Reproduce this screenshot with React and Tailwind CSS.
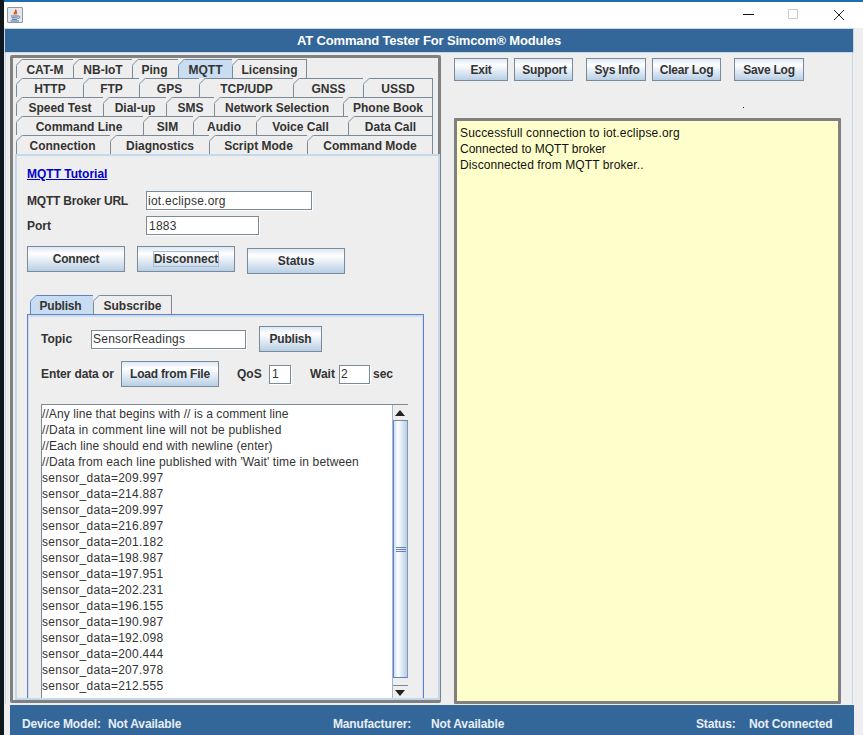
const tabRows = [
  [["CAT-M", 57], ["NB-IoT", 59], ["Ping", 46, false, "pr-[2px]"], ["MQTT", 54, true], ["Licensing", 74]],
  [["HTTP", 67], ["FTP", 56], ["GPS", 60], ["TCP/UDP", 94], ["GNSS", 70], ["USSD", 69]],
  [["Speed Test", 87], ["Dial-up", 63], ["SMS", 48], ["Network Selection", 129, false, "pr-[4px]"], ["Phone Book", 89]],
  [["Command Line", 127, false, "pr-[2px]"], ["SIM", 50, false, "pr-[2px]"], ["Audio", 63, false, "pr-[2px]"], ["Voice Call", 92, false, "pr-[4px]"], ["Data Call", 84]],
  [["Connection", 94, false, "pr-[2px]"], ["Diagnostics", 99], ["Script Mode", 98], ["Command Mode", 125]],
];

const lines = [
  ["//Any line that begins with // is a comment line", "tracking-[0.08px]"],
  ["//Data in comment line will not be published", "tracking-[0.2px]"],
  ["//Each line should end with newline (enter)", "tracking-[0.12px]"],
  ["//Data from each line published with 'Wait' time in between", "tracking-[0.135px]"],
  ["sensor_data=209.997", "tracking-[0.26px]"],
  ["sensor_data=214.887", "tracking-[0.26px]"],
  ["sensor_data=209.997", "tracking-[0.26px]"],
  ["sensor_data=216.897", "tracking-[0.26px]"],
  ["sensor_data=201.182", "tracking-[0.26px]"],
  ["sensor_data=198.987", "tracking-[0.26px]"],
  ["sensor_data=197.951", "tracking-[0.26px]"],
  ["sensor_data=202.231", "tracking-[0.26px]"],
  ["sensor_data=196.155", "tracking-[0.26px]"],
  ["sensor_data=190.987", "tracking-[0.26px]"],
  ["sensor_data=192.098", "tracking-[0.26px]"],
  ["sensor_data=200.444", "tracking-[0.26px]"],
  ["sensor_data=207.978", "tracking-[0.26px]"],
  ["sensor_data=212.555", "tracking-[0.26px]"],
];

function Tab({ label, width, active, line = "#7a8a99", height = 19, textClass = "" }) {
  return (
    <div
      className={`relative flex shrink-0 items-center justify-center border-t border-r border-l text-xs font-bold text-[#333333] ${active ? "bg-[#c8ddf2]" : "bg-[#eeeeee]"}`}
      style={{ width, height, borderColor: line }}
    >
      <svg className="absolute -left-px -top-px" width="7" height="7" viewBox="0 0 7 7">
        <polygon points="0,0 7,0 0,7" fill="#eeeeee" />
        <line x1="0" y1="6.5" x2="6.5" y2="0" stroke={line} strokeWidth="1" />
      </svg>
      <span className={`pt-px ${textClass}`}>{label}</span>
    </div>
  );
}

function Btn({ children, className = "" }) {
  return (
    <div
      className={`flex shrink-0 items-center justify-center border border-[#7a8a99] bg-[linear-gradient(180deg,#dde8f3_0%,#ffffff_28%,#b8cfe5_100%)] text-xs font-bold tracking-[-0.2px] text-[#333333] ${className}`}
    >
      {children}
    </div>
  );
}

function Field({ value, className = "" }) {
  return (
    <div className={`flex shrink-0 items-center border border-[#7a8a99] bg-white pl-[1px] text-xs tracking-[0.25px] text-[#333333] shadow-[1px_1px_0_#ffffff] ${className}`}>
      {value}
    </div>
  );
}

function ScrollArrow({ up }) {
  return (
    <svg width="10" height="6" viewBox="0 0 10 6">
      <polygon points={up ? "5,0 10,6 0,6" : "0,0 10,0 5,6"} fill="#222222" />
    </svg>
  );
}

export default function App() {
  return (
    <div className="relative flex h-[735px] w-[863px] flex-col overflow-hidden bg-[#eeeeee] font-['Liberation_Sans',Arial,sans-serif]">
      <div className="flex h-[28px] shrink-0 border-t-2 border-t-[#1f6fb0] bg-white pl-[7px]">
        <div className="mt-[5px] flex h-[16px] w-[16px] items-center justify-center rounded-[1px] border border-[#8c98a3] bg-[#e4e8ec]">
          <svg width="12" height="13" viewBox="0 0 12 13">
            <path d="M6.5 0.5 C8 2.5 4 3.5 5.2 5.5 C4.8 3.8 8.5 3.2 7 1.2 M8 3 C7 4 6.4 4.6 7 6" fill="none" stroke="#d9531e" strokeWidth="1.1" />
            <path d="M2 7 H9 M2.5 8.8 H8.5 M3 10.6 H8 M1.5 12 H10 M9 7 C11.5 6.8 11.5 9.5 8.5 9.5" fill="none" stroke="#3f6b9c" strokeWidth="0.9" />
          </svg>
        </div>
        <div className="ml-auto flex items-start">
          <svg className="mt-[12px]" width="11" height="2" viewBox="0 0 11 2">
            <rect width="11" height="1" fill="#111111" />
          </svg>
          <svg className="ml-[34px] mt-[7px]" width="10" height="10" viewBox="0 0 10 10">
            <rect x="0.5" y="0.5" width="9" height="9" fill="none" stroke="#cccccc" />
          </svg>
          <svg className="ml-[35px] mr-[18px] mt-[7px]" width="12" height="12" viewBox="0 0 12 12">
            <path d="M1 1 L11 11 M11 1 L1 11" stroke="#222222" strokeWidth="1" />
          </svg>
        </div>
      </div>

      <div className="ml-[4px] mr-[9px] flex h-[25px] shrink-0 items-center justify-center border border-[#c5d6e6] bg-[#336699] text-[13px] font-bold tracking-[-0.16px] text-white">
        AT Command Tester For Simcom® Modules
      </div>

      <div className="ml-[5px] mr-[10px] flex min-h-0 flex-1 border-x border-[#c5d6e6]">
        <div className="ml-[4px] mt-[2px] flex h-[648px] w-[431px] shrink-0 flex-col rounded-[2px] border-[3px] border-[#808080] pl-[2px] pt-[1px]">
          <div className="flex flex-col">
            {tabRows.map((row, i) => (
              <div key={i} className="flex pl-[1px]">
                {row.map(([label, w, a, t]) => (
                  <div key={label} className="-mr-px">
                    <Tab label={label} width={w + 1} active={a} textClass={t} />
                  </div>
                ))}
              </div>
            ))}
          </div>
          <div className="flex min-h-0 w-[425px] flex-1 flex-col border-2 border-[#c4d8ec] pl-[10px] pt-[11px]">
            <div className="text-xs font-bold leading-[15px] text-[#0000cc] underline">MQTT Tutorial</div>
            <div className="mt-[9px] flex items-center">
              <span className="w-[119px] text-xs font-bold tracking-[-0.2px] text-[#333333]">MQTT Broker URL</span>
              <Field value="iot.eclipse.org" className="h-[19px] w-[166px]" />
            </div>
            <div className="mt-[6px] flex items-center">
              <span className="w-[119px] text-xs font-bold text-[#333333]">Port</span>
              <Field value="1883" className="h-[19px] w-[113px] pl-[2px]" />
            </div>
            <div className="mt-[11px] flex items-start gap-[12px]">
              <Btn className="h-[26px] w-[98px]">Connect</Btn>
              <Btn className="h-[26px] w-[98px]">
                <span className="border border-[#a3bdd8] leading-[14px] tracking-normal">Disconnect</span>
              </Btn>
              <Btn className="mt-[2px] h-[26px] w-[98px]">
                <span className="tracking-normal">Status</span>
              </Btn>
            </div>

            <div className="mt-[21px] flex pl-[3px]">
              <div className="-mr-px">
                <Tab label="Publish" width={64} active line="#6382bf" textClass="tracking-[-0.2px] pr-[3px]" />
              </div>
              <Tab label="Subscribe" width={79} line="#7a8a99" />
            </div>
            <div className="flex min-h-0 w-[397px] flex-1 flex-col border-x border-t border-[#6382bf] pl-[13px] shadow-[inset_0_2px_0_#c8ddf2,inset_1px_0_0_#c8ddf2,inset_-1px_0_0_#c8ddf2]">
              <div className="mt-[11px] flex items-center">
                <span className="w-[50px] text-xs font-bold text-[#333333]">Topic</span>
                <Field value="SensorReadings" className="h-[19px] w-[155px]" />
                <Btn className="ml-[13px] h-[26px] w-[63px]">Publish</Btn>
              </div>
              <div className="mt-[9px] flex items-center">
                <span className="w-[80px] text-xs font-bold tracking-[-0.1px] text-[#333333]">Enter data or</span>
                <Btn className="h-[26px] w-[98px]">Load from File</Btn>
                <span className="ml-[18px] w-[32px] text-xs font-bold text-[#333333]">QoS</span>
                <Field value="1" className="h-[19px] w-[22px] pl-[2px]" />
                <span className="ml-[19px] w-[29px] text-xs font-bold text-[#333333]">Wait</span>
                <Field value="2" className="h-[19px] w-[31px]" />
                <span className="ml-[3px] text-xs font-bold text-[#333333]">sec</span>
              </div>
              <div className="mt-[17px] flex min-h-0 w-[367px] flex-1 border-l border-t border-[#7a8a99] bg-white">
                <div className="min-w-0 flex-1 overflow-hidden pt-[1px]">
                  {lines.map(([l, t], i) => (
                    <div key={i} className={`h-[16px] whitespace-nowrap text-xs leading-[16px] text-[#333333] ${t}`}>{l}</div>
                  ))}
                </div>
                <div className="flex w-[16px] shrink-0 flex-col border-l border-[#a3b8cc] bg-[#eeeeee]">
                  <div className="flex h-[16px] shrink-0 items-center justify-center border-b border-[#7a8a99] pr-px">
                    <ScrollArrow up />
                  </div>
                  <div className="flex h-[257px] shrink-0 items-center justify-center border-b border-l border-r border-b-[#6382bf] border-l-[#6382bf] border-r-[#8096b8] bg-[linear-gradient(90deg,#c8ddf2_0%,#ffffff_30%,#b8cfe5_100%)]">
                    <div className="flex w-[10px] flex-col gap-px">
                      <div className="h-px bg-[#6382bf]" />
                      <div className="h-px bg-[#6382bf]" />
                      <div className="h-px bg-[#6382bf]" />
                    </div>
                  </div>
                  <div className="h-[8px] shrink-0 border-b border-[#7a8a99]" />
                  <div className="flex h-[14px] shrink-0 items-center justify-center pr-px">
                    <ScrollArrow />
                  </div>
                </div>
              </div>
            </div>
          </div>
        </div>

        <div className="ml-[13px] flex min-w-0 flex-1 flex-col pt-[5px]">
          <div className="flex items-start">
            <Btn className="h-[23px] w-[54px]">Exit</Btn>
            <Btn className="ml-[6px] h-[23px] w-[59px] pl-[2px]">Support</Btn>
            <Btn className="ml-[13px] h-[23px] w-[60px] pl-[2px]">Sys Info</Btn>
            <Btn className="ml-[6px] h-[23px] w-[69px]">Clear Log</Btn>
            <Btn className="ml-[13px] h-[23px] w-[70px]">Save Log</Btn>
          </div>
          <div className="ml-[289px] mt-[26px] h-px w-px bg-[#0000cc]" />
          <div className="mt-[10px] h-[586px] w-[387px] rounded-[1px] border-[3px] border-[#808080] bg-[#ffffcc] pl-[3px] pt-[4px] text-xs leading-[16px] text-[#111111]">
            <div className="tracking-[0.17px]">Successfull connection to iot.eclipse.org</div>
            <div>Connected to MQTT broker</div>
            <div className="tracking-[0.1px]">Disconnected from MQTT broker..</div>
          </div>
        </div>
      </div>

      <div className="ml-[10px] mr-[9px] mt-[1px] flex h-[30px] shrink-0 items-end bg-[#336699] pb-[3px] pl-[12px] text-xs font-bold tracking-[-0.15px] text-[#e8eef5]">
        <span className="w-[86px]">Device Model:</span>
        <span className="w-[225px]">Not Available</span>
        <span className="w-[98px]">Manufacturer:</span>
        <span className="w-[265px]">Not Available</span>
        <span className="w-[53px]">Status:</span>
        <span>Not Connected</span>
      </div>
      <div className="absolute bottom-0 left-0 top-0 w-[4px] bg-[#10181f]" />
    </div>
  );
}
